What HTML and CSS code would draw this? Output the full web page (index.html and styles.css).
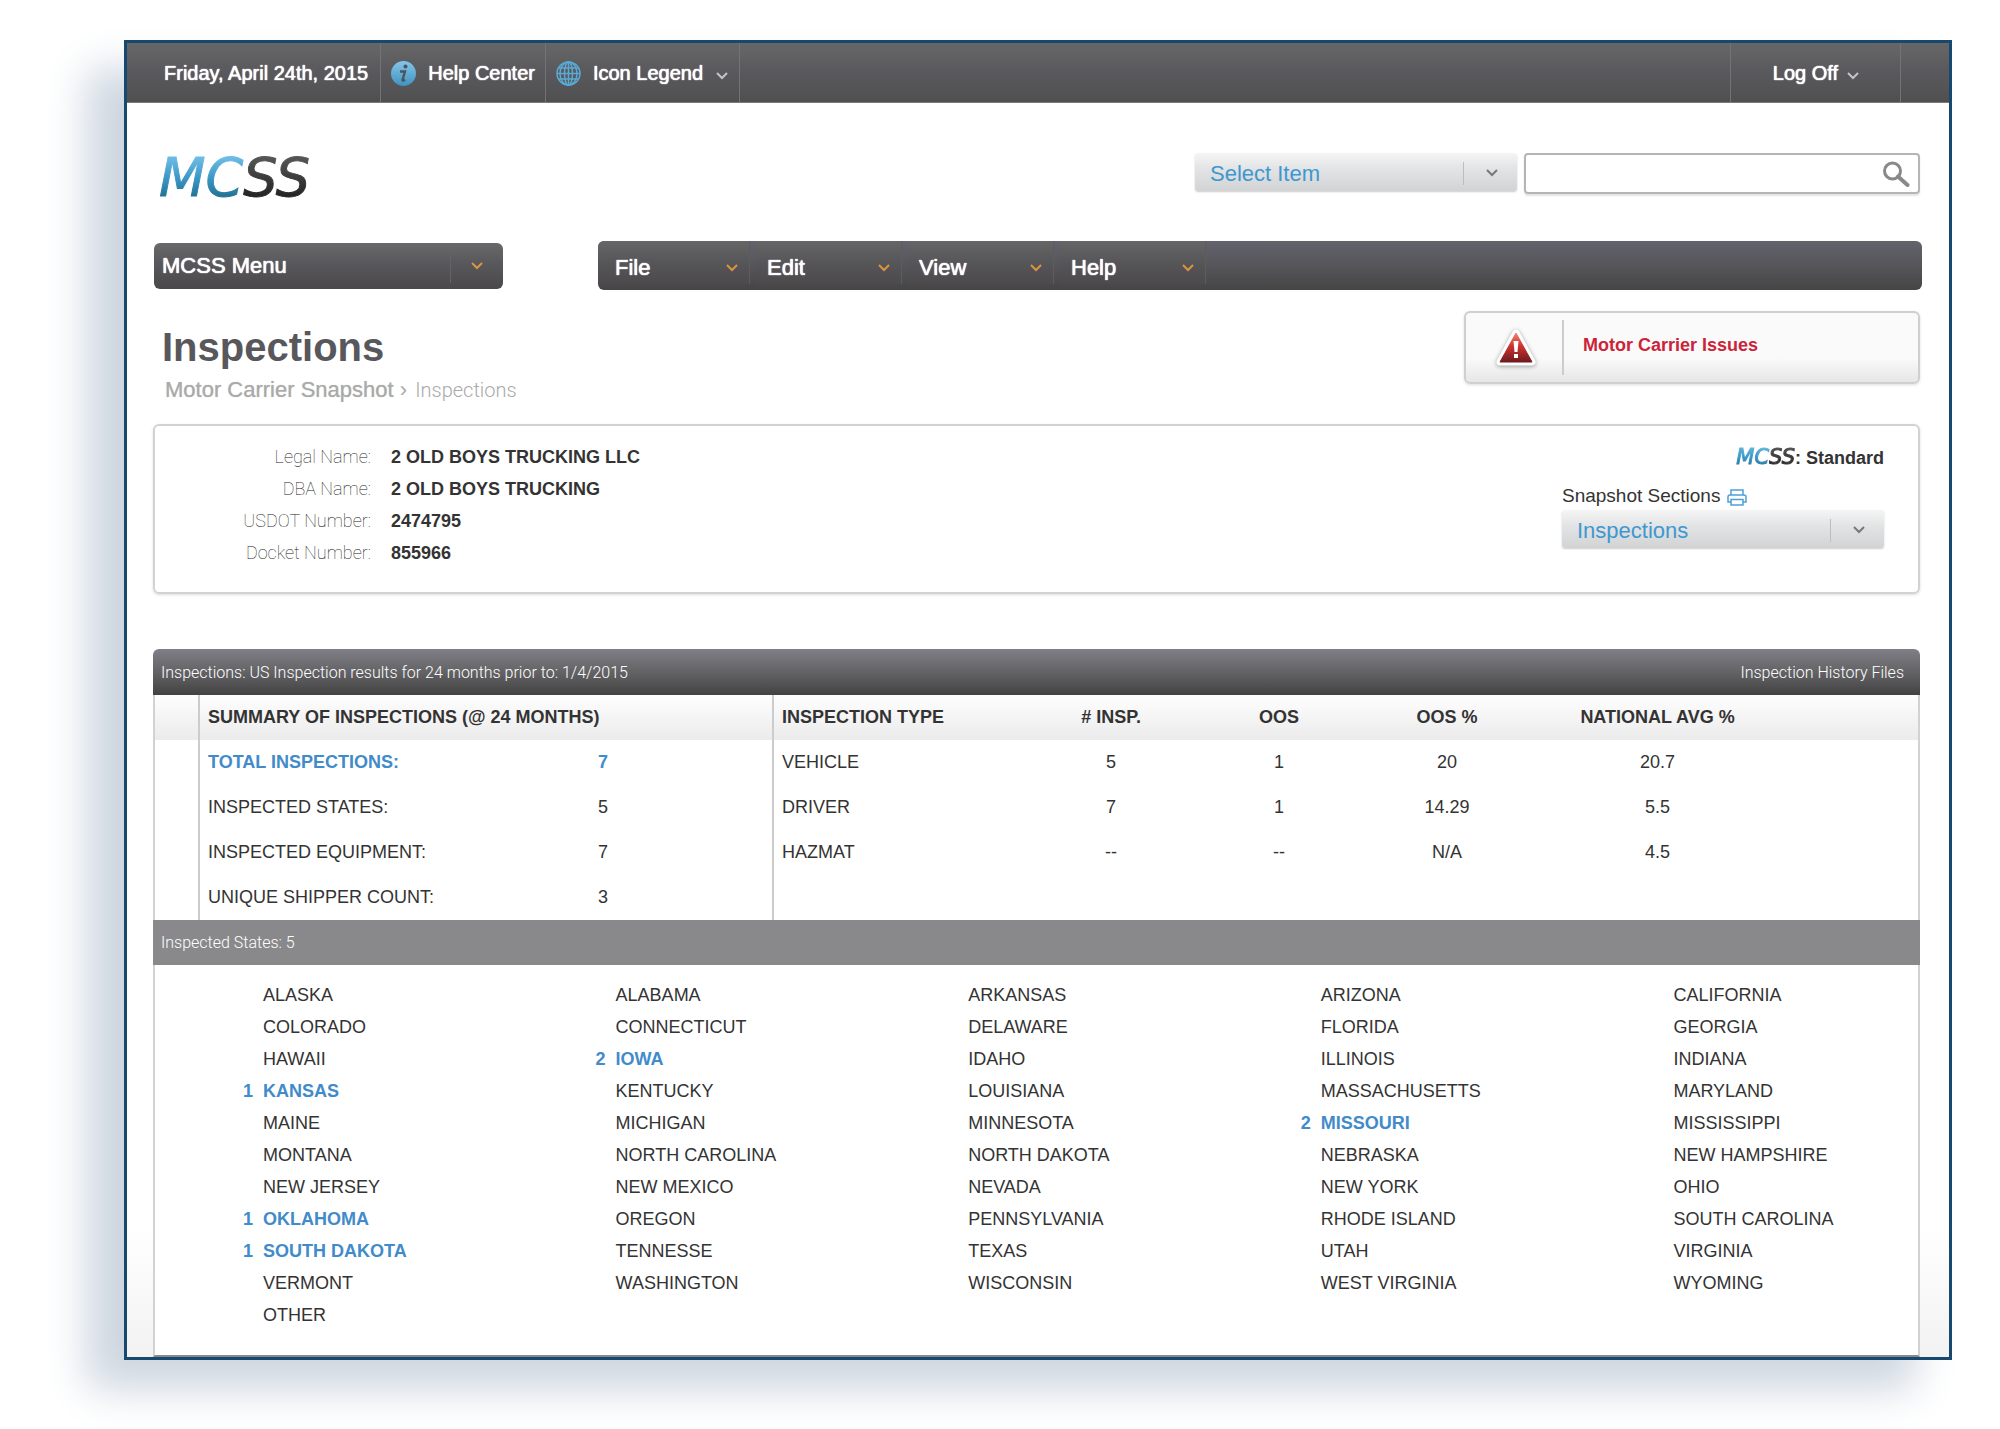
FILE: index.html
```html
<!DOCTYPE html>
<html lang="en">
<head>
    <meta charset="UTF-8">
    <meta name="viewport" content="width=device-width, initial-scale=1.0">
    <title>MCSS - Inspections</title>
    <link rel="stylesheet" href="styles.css">
</head>
<body>
    <svg class="sprite" aria-hidden="true">
        <symbol id="chevron" viewBox="0 0 14 10">
            <path d="M2 2l5 5 5-5" fill="none" stroke="currentColor" stroke-width="2"/>
        </symbol>
    </svg>

    <div class="window">
        <div class="topbar">
            <span class="topbar-item date">Friday, April 24th, 2015</span>
            <a class="topbar-item" href="#">
                <svg class="topbar-icon" viewBox="0 0 25 25" aria-hidden="true">
                    <defs>
                        <linearGradient id="ball" x1="0" y1="0" x2="0" y2="1">
                            <stop offset="0" stop-color="#86c5ea"/>
                            <stop offset="1" stop-color="#3f93bf"/>
                        </linearGradient>
                    </defs>
                    <circle cx="12.500" cy="12.500" r="12.500" fill="url(#ball)"/>
                    <circle cx="14.500" cy="5.500" r="2" fill="#4b5560"/>
                    <path d="M9 10.500h5l-2.500 8.500q0 1.500 2.500-.5" fill="none" stroke="#4b5560" stroke-width="2.400"/>
                </svg>
                Help Center
            </a>
            <button class="topbar-item" type="button">
                <svg class="topbar-icon" viewBox="0 0 25 25" aria-hidden="true">
                    <g fill="none" stroke="#5aaad6" stroke-width="1.500">
                        <circle cx="12.500" cy="12.500" r="11.500"/>
                        <ellipse cx="12.500" cy="12.500" rx="8.500" ry="11.500"/>
                        <ellipse cx="12.500" cy="12.500" rx="4" ry="11.500"/>
                        <path d="M12.500 1v23M1 12.500h23M3 7h19M3 18h19"/>
                    </g>
                </svg>
                Icon Legend
                <svg class="chevron"><use href="#chevron"/></svg>
            </button>
            <button class="topbar-item logoff" type="button">
                Log Off
                <svg class="chevron"><use href="#chevron"/></svg>
            </button>
        </div>

        <div class="page">
            <header class="header">
                <div class="logo"><span class="logo-mc">MC</span><span class="logo-ss">SS</span></div>
                <form class="search">
                    <div class="select">
                        <select aria-label="Select Item">
                            <option>Select Item</option>
                        </select>
                        <svg class="chevron"><use href="#chevron"/></svg>
                    </div>
                    <div class="search-box">
                        <input type="text" aria-label="Search">
                        <button type="submit" aria-label="Search">
                            <svg viewBox="0 0 28 26" aria-hidden="true">
                                <circle cx="10.500" cy="10" r="8" fill="none" stroke="#88898b" stroke-width="3"/>
                                <path d="M16 15.500l9.500 8.500" stroke="#88898b" stroke-width="4" stroke-linecap="round"/>
                            </svg>
                        </button>
                    </div>
                </form>
            </header>

            <div class="menus">
                <button class="main-menu" type="button">
                    MCSS Menu
                    <span class="main-menu-arrow"><svg class="chevron"><use href="#chevron"/></svg></span>
                </button>
                <nav class="navbar">
                    <button type="button">File <svg class="chevron"><use href="#chevron"/></svg></button>
                    <button type="button">Edit <svg class="chevron"><use href="#chevron"/></svg></button>
                    <button type="button">View <svg class="chevron"><use href="#chevron"/></svg></button>
                    <button type="button">Help <svg class="chevron"><use href="#chevron"/></svg></button>
                </nav>
            </div>

            <div class="title-row">
                <div class="title">
                    <h1>Inspections</h1>
                    <div class="breadcrumb"><a href="#">Motor Carrier Snapshot</a> › <span class="thin">Inspections</span></div>
                </div>
                <a class="alert" href="#">
                    <span class="alert-icon">
                        <svg viewBox="0 0 42 40" aria-hidden="true">
                            <defs>
                                <linearGradient id="warn" x1="0" y1="0" x2="0" y2="1">
                                    <stop offset="0" stop-color="#f08069"/>
                                    <stop offset=".45" stop-color="#cf3430"/>
                                    <stop offset="1" stop-color="#6f1a1e"/>
                                </linearGradient>
                            </defs>
                            <path d="M21 5L37 34H5z" fill="#fff" stroke="#fff" stroke-width="7" stroke-linejoin="round"/>
                            <path d="M21 5L37 34H5z" fill="url(#warn)" stroke="url(#warn)" stroke-linejoin="round"/>
                            <path d="M18.500 13h5l-1 11h-3zM19 26h4v4h-4z" fill="#fff"/>
                        </svg>
                    </span>
                    <span class="alert-text">Motor Carrier Issues</span>
                </a>
            </div>

            <section class="info">
                <dl>
                    <dt class="thin">Legal Name:</dt><dd>2 OLD BOYS TRUCKING LLC</dd>
                    <dt class="thin">DBA Name:</dt><dd>2 OLD BOYS TRUCKING</dd>
                    <dt class="thin">USDOT Number:</dt><dd>2474795</dd>
                    <dt class="thin">Docket Number:</dt><dd>855966</dd>
                </dl>
                <div class="info-side">
                    <div class="plan"><span class="logo logo-small"><span class="logo-mc">MC</span><span class="logo-ss">SS</span></span>: Standard</div>
                    <div class="sections-label">
                        <label for="sections">Snapshot Sections</label>
                        <svg viewBox="0 0 20 17" aria-hidden="true">
                            <g fill="#fff" stroke="#4d9fd6" stroke-width="1.500">
                                <path d="M4 6V1h12v5"/>
                                <path d="M4 13H1V8q0-2 2-2h14q2 0 2 2v5h-3"/>
                                <path d="M4 10.500h12V16H4z"/>
                            </g>
                        </svg>
                    </div>
                    <div class="select">
                        <select id="sections">
                            <option>Inspections</option>
                        </select>
                        <svg class="chevron"><use href="#chevron"/></svg>
                    </div>
                </div>
            </section>

            <section class="results">
                <div class="results-head">
                    <h2>Inspections: US Inspection results for 24 months prior to: 1/4/2015</h2>
                    <a href="#">Inspection History Files</a>
                </div>
                <div class="tables">
                    <table class="summary">
                        <colgroup>
                            <col class="gutter-col"><col><col class="value-col">
                        </colgroup>
                        <thead>
                            <tr><td class="gutter"></td><th colspan="2">SUMMARY OF INSPECTIONS (@ 24 MONTHS)</th></tr>
                        </thead>
                        <tbody>
                            <tr class="hit"><td class="gutter"></td><td>TOTAL INSPECTIONS:</td><td>7</td></tr>
                            <tr><td class="gutter"></td><td>INSPECTED STATES:</td><td>5</td></tr>
                            <tr><td class="gutter"></td><td>INSPECTED EQUIPMENT:</td><td>7</td></tr>
                            <tr><td class="gutter"></td><td>UNIQUE SHIPPER COUNT:</td><td>3</td></tr>
                        </tbody>
                    </table>
                    <div class="types">
                        <table>
                            <colgroup>
                                <col class="wide"><col class="narrow"><col class="narrow"><col class="narrow"><col class="wide"><col>
                            </colgroup>
                            <thead>
                                <tr><th>INSPECTION TYPE</th><th># INSP.</th><th>OOS</th><th>OOS %</th><th>NATIONAL AVG %</th><td></td></tr>
                            </thead>
                            <tbody>
                                <tr><td>VEHICLE</td><td>5</td><td>1</td><td>20</td><td>20.7</td><td></td></tr>
                                <tr><td>DRIVER</td><td>7</td><td>1</td><td>14.29</td><td>5.5</td><td></td></tr>
                                <tr><td>HAZMAT</td><td>--</td><td>--</td><td>N/A</td><td>4.5</td><td></td></tr>
                            </tbody>
                        </table>
                    </div>
                </div>
                <h3 class="band">Inspected States: 5</h3>
                <ul class="states">
                    <li>ALASKA</li><li>ALABAMA</li><li>ARKANSAS</li><li>ARIZONA</li><li>CALIFORNIA</li>
                    <li>COLORADO</li><li>CONNECTICUT</li><li>DELAWARE</li><li>FLORIDA</li><li>GEORGIA</li>
                    <li>HAWAII</li><li class="hit"><b>2</b>IOWA</li><li>IDAHO</li><li>ILLINOIS</li><li>INDIANA</li>
                    <li class="hit"><b>1</b>KANSAS</li><li>KENTUCKY</li><li>LOUISIANA</li><li>MASSACHUSETTS</li><li>MARYLAND</li>
                    <li>MAINE</li><li>MICHIGAN</li><li>MINNESOTA</li><li class="hit"><b>2</b>MISSOURI</li><li>MISSISSIPPI</li>
                    <li>MONTANA</li><li>NORTH CAROLINA</li><li>NORTH DAKOTA</li><li>NEBRASKA</li><li>NEW HAMPSHIRE</li>
                    <li>NEW JERSEY</li><li>NEW MEXICO</li><li>NEVADA</li><li>NEW YORK</li><li>OHIO</li>
                    <li class="hit"><b>1</b>OKLAHOMA</li><li>OREGON</li><li>PENNSYLVANIA</li><li>RHODE ISLAND</li><li>SOUTH CAROLINA</li>
                    <li class="hit"><b>1</b>SOUTH DAKOTA</li><li>TENNESSE</li><li>TEXAS</li><li>UTAH</li><li>VIRGINIA</li>
                    <li>VERMONT</li><li>WASHINGTON</li><li>WISCONSIN</li><li>WEST VIRGINIA</li><li>WYOMING</li>
                    <li>OTHER</li>
                </ul>
            </section>
        </div>
    </div>
</body>
</html>
```
FILE: styles.css
```css
* {
    box-sizing: border-box;
}
body {
    margin: 0;
    padding: 40px 48px 68px 124px;
    background: #fff;
    color: #333;
    font-family: "Liberation Sans", Arial, sans-serif;
    font-size: 18px;
}
a {
    color: inherit;
    text-decoration: none;
}
button, input, select {
    font: inherit;
    color: inherit;
    margin: 0;
    border: none;
    cursor: pointer;
}
h1, h2, h3, dl, dd, ul {
    margin: 0;
    padding: 0;
}
.sprite {
    position: absolute;
    width: 0;
    height: 0;
}
.chevron {
    width: 14px;
    height: 10px;
}
.thin {
    font-family: Roboto, "Liberation Sans", sans-serif;
    font-weight: 100;
}
.hit {
    color: #428bca;
    font-weight: bold;
}

.window {
    border: 3px solid #174970;
    background: linear-gradient(#fff, #fff) top / 100% calc(100% - 130px) no-repeat, linear-gradient(to top, #f2f2f2, #fff 130px);
    box-shadow: -37px 29px 40px #cdd6e0;
}

/* top bar */
.topbar {
    display: flex;
    height: 60px;
    padding: 0 48px 0 37px;
    background: linear-gradient(#676667, #59585c 50%, #504f50);
    border-bottom: 1px solid #7b7b7d;
    color: #fff;
    font-size: 20px;
    text-shadow: 0 0 1px #fff, 0 0 1px #fff;
}
.topbar-item {
    display: flex;
    align-items: center;
    gap: 12px;
    padding: 1px 10px 0;
    background: none;
    border-right: 1px solid #737376;
    text-shadow: inherit;
}
.topbar-item.date {
    padding-left: 0;
    padding-right: 12px;
}
.topbar-item .chevron {
    color: #c4c4c6;
    margin-top: 6px;
}
.topbar-icon {
    width: 25px;
    height: 25px;
}
.topbar-item.logoff {
    gap: 8px;
    margin-left: auto;
    padding-left: 42px;
    padding-right: 40px;
    border-left: 1px solid #737376;
}

.page {
    padding: 50px 29px 0 26px;
}

/* logo and search */
.header {
    display: flex;
    justify-content: space-between;
    height: 41px;
}
.logo {
    font-family: "DejaVu Sans", sans-serif;
    font-style: italic;
    font-weight: 400;
    font-size: 54px;
    line-height: 50px;
    padding-left: 6px;
    -webkit-text-stroke: 1px transparent;
}
.logo-mc, .logo-ss {
    display: inline-block;
    padding-right: 4px;
    margin-right: -4px;
    background: linear-gradient(#6cbbe4 10%, #3b97c6 50%, #1d6a8c 95%);
    background-clip: text;
    -webkit-background-clip: text;
    color: transparent;
}
.logo-ss {
    background-image: linear-gradient(#555 10%, #222 90%);
}
.logo-small {
    font-size: 21px;
    line-height: 32px;
    padding: 0;
}
.search {
    display: flex;
    gap: 7px;
}
.select {
    position: relative;
    width: 322px;
    height: 38px;
}
.select select {
    appearance: none;
    width: 100%;
    height: 100%;
    padding: 2px 60px 0 15px;
    background: linear-gradient(#f5f5f5, #e3e4e5 40%, #d2d3d5);
    border-radius: 3px;
    box-shadow: 0 1px 2px #ccc;
    color: #3e98cf;
    font-size: 22px;
}
.select::after {
    content: "";
    position: absolute;
    top: 9px;
    bottom: 6px;
    right: 53px;
    border-left: 1px solid #bcbdbf;
}
.select .chevron {
    position: absolute;
    right: 18px;
    top: 15px;
    color: #77787a;
    pointer-events: none;
}
.search-box {
    display: flex;
    width: 396px;
    border: 2px solid #b4b5b9;
    border-radius: 4px;
    box-shadow: 0 2px 2px #e4e4e4;
}
.search-box input {
    flex: 1;
    min-width: 0;
    background: none;
    outline: none;
}
.search-box button {
    padding: 0 8px;
    background: none;
}
.search-box svg {
    display: block;
    width: 28px;
    height: 26px;
}

/* menus */
.menus {
    display: flex;
    align-items: center;
    gap: 95px;
    margin: 47px -2px 0 1px;
    color: #fff;
    font-size: 22px;
    text-shadow: 0 0 1px #fff, 0 0 1px #fff;
}
.main-menu {
    display: flex;
    align-items: center;
    justify-content: space-between;
    width: 349px;
    height: 46px;
    padding: 0 0 0 8px;
    border-radius: 6px;
    background: linear-gradient(#69696b, #58575b 45%, #4a4849);
    text-shadow: inherit;
}
.main-menu-arrow {
    display: flex;
    align-items: center;
    height: 34px;
    padding: 0 19px;
    border-left: 1px solid #636266;
}
.menus .chevron {
    color: #dc9440;
}
.navbar {
    display: flex;
    flex: 1;
    gap: 7px;
    height: 49px;
    padding-bottom: 6px;
    border-radius: 6px;
    background: linear-gradient(#63636e, #565559 50%, #454545);
}
.navbar button {
    display: flex;
    align-items: center;
    justify-content: space-between;
    width: 145px;
    padding: 10px 10px 0;
    border-right: 1px solid #5c5b60;
    background: linear-gradient(#666667, #565558 50%, #4c4a4b);
    text-shadow: inherit;
}
.navbar button:first-child {
    width: 152px;
    padding-left: 17px;
    border-top-left-radius: 6px;
}

/* title */
.title-row {
    display: flex;
    justify-content: space-between;
    align-items: flex-start;
    margin-top: 21px;
}
.title {
    padding: 12px 0 0 9px;
}
h1 {
    color: #58575c;
    font-size: 40px;
    line-height: 48px;
}
.breadcrumb {
    padding-left: 3px;
    color: #aaa;
    font-size: 22px;
    line-height: 37px;
}
.breadcrumb a {
    text-shadow: 0 0 1px #bbb;
}
.breadcrumb .thin {
    margin-left: 2px;
    font-weight: 300;
    font-size: 20px;
}
.alert {
    display: flex;
    align-items: center;
    width: 456px;
    height: 73px;
    border: 2px solid #cfcfcf;
    border-radius: 6px;
    background: linear-gradient(#fafafa 65%, #e6e6e6);
    box-shadow: 0 1px 3px #ddd;
    color: #cb2439;
    font-weight: bold;
}
.alert-icon {
    display: flex;
    align-items: center;
    justify-content: flex-end;
    width: 98px;
    height: 55px;
    padding-right: 25px;
    border-right: 2px solid #ccc;
}
.alert-icon svg {
    width: 42px;
    height: 40px;
    overflow: visible;
    filter: drop-shadow(0 1px 2px #999);
}
.alert-text {
    padding: 0 0 4px 19px;
}

/* carrier info */
.info {
    display: flex;
    justify-content: space-between;
    min-height: 170px;
    margin-top: 15px;
    padding: 15px 34px 15px 0;
    border: 2px solid #d2d2d2;
    border-radius: 6px;
    box-shadow: 0 1px 3px #ddd;
}
.info dl {
    display: grid;
    grid-template-columns: 216px auto;
    column-gap: 20px;
    align-content: start;
    line-height: 32px;
}
.info dt {
    text-align: right;
    color: #222;
}
.info dd {
    font-weight: bold;
}
.plan {
    text-align: right;
    font-weight: bold;
    line-height: 32px;
    height: 32px;
}
.sections-label {
    display: flex;
    align-items: center;
    gap: 7px;
    margin-top: 8px;
    font-size: 19px;
    line-height: 29px;
}
.sections-label svg {
    width: 20px;
    height: 17px;
    margin-top: 4px;
}

/* results */
.results {
    margin-top: 55px;
}
.results-head {
    display: flex;
    align-items: center;
    justify-content: space-between;
    height: 46px;
    padding: 0 16px 0 8px;
    border-radius: 6px 6px 0 0;
    background: linear-gradient(#807f86, #636265 50%, #434343);
    color: #fff;
    font-family: Roboto, "Liberation Sans", sans-serif;
    font-size: 16px;
    font-weight: 300;
}
.results-head h2 {
    font-size: inherit;
    font-weight: 300;
}
.tables {
    display: grid;
    grid-template-columns: 35% 65%;
    background: #fff;
    border-left: 2px solid #d2d2d2;
    border-right: 2px solid #d2d2d2;
}
.tables table {
    width: 100%;
    border-collapse: collapse;
    table-layout: fixed;
}
.tables thead {
    background: linear-gradient(#fefefe, #ebebeb);
}
.tables tr {
    height: 45px;
}
.tables th, .tables td {
    padding: 0 8px;
    text-align: left;
}
.gutter-col {
    width: 44px;
}
.value-col {
    width: 182px;
}
.summary .gutter {
    border-right: 2px solid #ccc;
}
.types {
    border-left: 2px solid #ccc;
}
.types .wide {
    width: 253px;
}
.types .narrow {
    width: 168px;
}
.types th + th, .types td + td {
    text-align: center;
}
.band {
    height: 45px;
    padding-left: 8px;
    background: #89898b;
    color: #fff;
    font-family: Roboto, "Liberation Sans", sans-serif;
    font-size: 16px;
    font-weight: 300;
    line-height: 45px;
}
.states {
    display: grid;
    grid-template-columns: repeat(5, 1fr);
    padding: 14px 0 24px;
    background: #fff;
    border: 2px solid #d2d2d2;
    border-top: none;
    border-bottom-color: #8a8a8c;
    list-style: none;
    line-height: 32px;
}
.states li {
    padding-left: 108px;
}
.states .hit {
    display: flex;
    gap: 10px;
    padding-left: 88px;
}
```
